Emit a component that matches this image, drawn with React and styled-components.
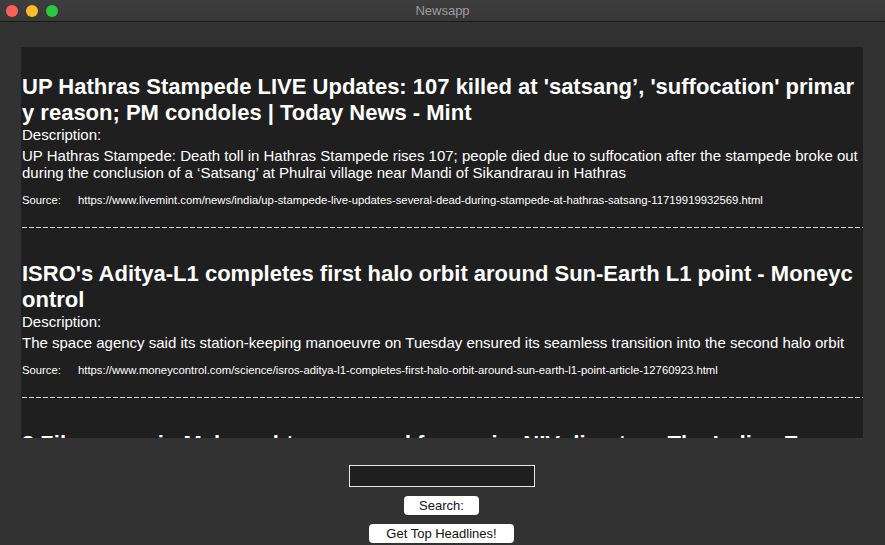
import React from "react";
import styled, { createGlobalStyle } from "styled-components";

const GlobalStyle = createGlobalStyle`
  html, body {
    margin: 0;
    padding: 0;
    background: #323232;
    font-family: "Liberation Sans", Arial, Helvetica, sans-serif;
  }
`;

const Window = styled.div`
  width: 885px;
  height: 545px;
  display: flex;
  flex-direction: column;
  background: #323232;
  overflow: hidden;
`;

const TitleBar = styled.div`
  height: 22px;
  flex: none;
  display: flex;
  align-items: center;
  position: relative;
  background: linear-gradient(#3e3e3e, #373737);
  border-bottom: 1px solid #1a1a1a;
  box-sizing: border-box;
`;

const Lights = styled.div`
  display: flex;
  gap: 8px;
  padding-left: 6px;
`;

const Light = styled.span`
  width: 12px;
  height: 12px;
  border-radius: 50%;
  background: ${(p) => p.color};
`;

const WindowTitle = styled.div`
  position: absolute;
  left: 0;
  right: 0;
  text-align: center;
  color: #9d9d9d;
  font-size: 13px;
`;

const Body = styled.div`
  flex: 1;
  display: flex;
  flex-direction: column;
  align-items: center;
  padding-top: 25px;
`;

const Feed = styled.div`
  width: 842px;
  height: 391px;
  margin-left: -1px;
  box-sizing: border-box;
  background: #1f1f1f;
  overflow: hidden;
  padding: 27px 1px 0 1px;
  color: #fff;
`;

const Article = styled.div`
  display: flex;
  flex-direction: column;
`;

const Headline = styled.div`
  font-size: 22px;
  font-weight: bold;
  line-height: 26px;
  word-break: break-all;
`;

const Label = styled.div`
  font-size: 15px;
  line-height: 18px;
`;

const Description = styled.div`
  font-size: 15px;
  line-height: 17px;
  margin-top: 3px;
`;

const SourceRow = styled.div`
  display: flex;
  font-size: 11.3px;
  line-height: 14px;
  margin-top: 12px;
`;

const SourceLabel = styled.span`
  width: 56px;
  flex: none;
`;

const Rule = styled.div`
  height: 1px;
  margin: 20px -1px 33px 0;
  background: repeating-linear-gradient(
    90deg,
    #d8d8d8 0 5px,
    transparent 5px 7px
  );
`;

const Controls = styled.div`
  display: flex;
  flex-direction: column;
  align-items: center;
  padding: 27px 2px 0 0;
`;

const SearchInput = styled.input`
  width: 186px;
  height: 22px;
  box-sizing: border-box;
  background: #1f1f1f;
  border: 1px solid #e6e6e6;
  outline: none;
  color: #fff;
  margin: 0;
`;

const Button = styled.button`
  width: ${(p) => p.w}px;
  height: 19px;
  margin-top: ${(p) => p.gap}px;
  box-sizing: border-box;
  border: none;
  border-radius: 4px;
  background: #fff;
  color: #111;
  font-family: "Liberation Sans", Arial, sans-serif;
  font-size: 13px;
  padding: 0;
  line-height: 19px;
`;

const articles = [
  {
    title:
      "UP Hathras Stampede LIVE Updates: 107 killed at 'satsang’, 'suffocation' primary reason; PM condoles | Today News - Mint",
    desc: "UP Hathras Stampede: Death toll in Hathras Stampede rises 107; people died due to suffocation after the stampede broke out during the conclusion of a ‘Satsang’ at Phulrai village near Mandi of Sikandrarau in Hathras",
    url: "https://www.livemint.com/news/india/up-stampede-live-updates-several-dead-during-stampede-at-hathras-satsang-11719919932569.html",
  },
  {
    title:
      "ISRO's Aditya-L1 completes first halo orbit around Sun-Earth L1 point - Moneycontrol",
    desc: "The space agency said its station-keeping manoeuvre on Tuesday ensured its seamless transition into the second halo orbit",
    url: "https://www.moneycontrol.com/science/isros-aditya-l1-completes-first-halo-orbit-around-sun-earth-l1-point-article-12760923.html",
  },
  {
    title:
      "3 Zika cases in Maharashtra, no need for panic: NIV director - The Indian Express",
    desc: "Three cases of Zika virus infection have been reported in the state, officials said.",
    url: "https://indianexpress.com/article/cities/pune/zika-cases-maharashtra-niv-director.html",
  },
];

export default function App() {
  return (
    <>
      <GlobalStyle />
      <Window>
        <TitleBar>
          <Lights>
            <Light color="#fe5f57" />
            <Light color="#febc2e" />
            <Light color="#28c840" />
          </Lights>
          <WindowTitle>Newsapp</WindowTitle>
        </TitleBar>
        <Body>
          <Feed>
            {articles.map((a) => (
              <Article key={a.url}>
                <Headline>{a.title}</Headline>
                <Label>Description:</Label>
                <Description>{a.desc}</Description>
                <SourceRow>
                  <SourceLabel>Source:</SourceLabel>
                  <span>{a.url}</span>
                </SourceRow>
                <Rule />
              </Article>
            ))}
          </Feed>
          <Controls>
            <SearchInput type="text" />
            <Button w={75} gap={9}>
              Search:
            </Button>
            <Button w={145} gap={9}>
              Get Top Headlines!
            </Button>
          </Controls>
        </Body>
      </Window>
    </>
  );
}
